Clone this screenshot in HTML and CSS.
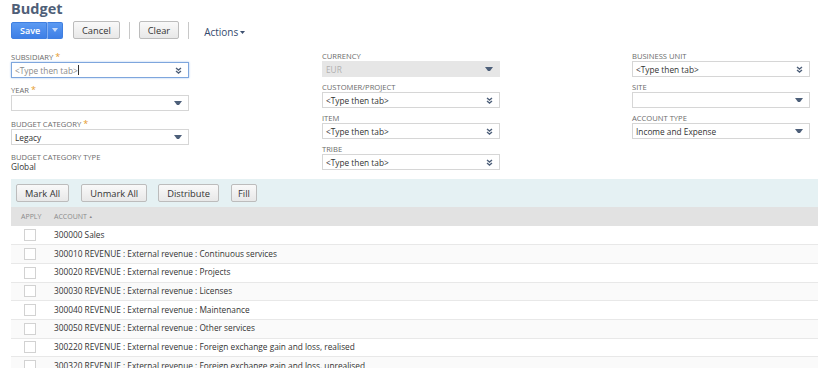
FILE: index.html
```html
<!DOCTYPE html>
<html lang="en">
<head>
  <meta charset="UTF-8" />
  <title>Budget</title>
  <link rel="stylesheet" href="styles.css">
</head>
<body>
  <div class="page">
    <h1 class="page-title">Budget</h1>
    <div class="toolbar">
      <div class="btn-split">
        <button class="btn-primary">Save</button>
        <button class="btn-primary btn-caret"><svg width="6" height="5" viewBox="0 0 6 5"><path d="M0 0 H6 L3 4 Z" fill="#c9dcfb"/></svg></button>
      </div>
      <button class="btn">Cancel</button>
      <span class="divider"></span>
      <button class="btn">Clear</button>
      <span class="divider"></span>
      <span class="actions">Actions <svg width="5" height="3" viewBox="0 0 5 3"><path d="M0 0 H5 L2.5 3 Z" fill="#3d5070"/></svg></span>
    </div>

    <div class="form-grid">
      <div class="form-col">
        <div class="field required">
          <div class="field-label">SUBSIDIARY <span class="star">*</span></div>
          <div class="field-input focused"><span class="muted">&lt;Type then tab&gt;</span><span class="cursor"></span><svg class="ico-dbl" width="7" height="7" viewBox="0 0 7 7"><path d="M1 1 L3.5 3 L6 1 M1 4 L3.5 6 L6 4" fill="none" stroke="#4d5f79" stroke-width="1.4"/></svg></div>
        </div>
        <div class="field required">
          <div class="field-label">YEAR <span class="star">*</span></div>
          <div class="field-input"><span></span><svg class="ico-tri" width="8" height="4" viewBox="0 0 8 4"><path d="M0 0 H8 L5 4 H3 Z" fill="#4d5f79"/></svg></div>
        </div>
        <div class="field required">
          <div class="field-label">BUDGET CATEGORY <span class="star">*</span></div>
          <div class="field-input"><span>Legacy</span><svg class="ico-tri" width="8" height="4" viewBox="0 0 8 4"><path d="M0 0 H8 L5 4 H3 Z" fill="#4d5f79"/></svg></div>
        </div>
        <div class="field">
          <div class="field-label">BUDGET CATEGORY TYPE</div>
          <div class="field-value">Global</div>
        </div>
      </div>

      <div class="form-col">
        <div class="field">
          <div class="field-label">CURRENCY</div>
          <div class="field-input disabled"><span>EUR</span><svg class="ico-tri" width="8" height="4" viewBox="0 0 8 4"><path d="M0 0 H8 L5 4 H3 Z" fill="#4d5f79"/></svg></div>
        </div>
        <div class="field">
          <div class="field-label">CUSTOMER/PROJECT</div>
          <div class="field-input"><span>&lt;Type then tab&gt;</span><svg class="ico-dbl" width="7" height="7" viewBox="0 0 7 7"><path d="M1 1 L3.5 3 L6 1 M1 4 L3.5 6 L6 4" fill="none" stroke="#4d5f79" stroke-width="1.4"/></svg></div>
        </div>
        <div class="field">
          <div class="field-label">ITEM</div>
          <div class="field-input"><span>&lt;Type then tab&gt;</span><svg class="ico-dbl" width="7" height="7" viewBox="0 0 7 7"><path d="M1 1 L3.5 3 L6 1 M1 4 L3.5 6 L6 4" fill="none" stroke="#4d5f79" stroke-width="1.4"/></svg></div>
        </div>
        <div class="field">
          <div class="field-label">TRIBE</div>
          <div class="field-input"><span>&lt;Type then tab&gt;</span><svg class="ico-dbl" width="7" height="7" viewBox="0 0 7 7"><path d="M1 1 L3.5 3 L6 1 M1 4 L3.5 6 L6 4" fill="none" stroke="#4d5f79" stroke-width="1.4"/></svg></div>
        </div>
      </div>

      <div class="form-col">
        <div class="field">
          <div class="field-label">BUSINESS UNIT</div>
          <div class="field-input"><span>&lt;Type then tab&gt;</span><svg class="ico-dbl" width="7" height="7" viewBox="0 0 7 7"><path d="M1 1 L3.5 3 L6 1 M1 4 L3.5 6 L6 4" fill="none" stroke="#4d5f79" stroke-width="1.4"/></svg></div>
        </div>
        <div class="field">
          <div class="field-label">SITE</div>
          <div class="field-input"><span></span><svg class="ico-tri" width="8" height="4" viewBox="0 0 8 4"><path d="M0 0 H8 L5 4 H3 Z" fill="#4d5f79"/></svg></div>
        </div>
        <div class="field">
          <div class="field-label">ACCOUNT TYPE</div>
          <div class="field-input"><span>Income and Expense</span><svg class="ico-tri" width="8" height="4" viewBox="0 0 8 4"><path d="M0 0 H8 L5 4 H3 Z" fill="#4d5f79"/></svg></div>
        </div>
      </div>
    </div>
  </div>

  <div class="sublist">
    <div class="sublist-bar">
      <button class="btn">Mark All</button>
      <button class="btn">Unmark All</button>
      <button class="btn btn-tight">Distribute</button>
      <button class="btn btn-small">Fill</button>
    </div>
    <table class="grid">
      <thead>
        <tr><th class="col-apply">APPLY</th><th>ACCOUNT <span class="sort">&#9650;</span></th></tr>
      </thead>
      <tbody>
        <tr><td class="col-apply"><span class="check"></span></td><td>300000 Sales</td></tr>
        <tr><td class="col-apply"><span class="check"></span></td><td>300010 REVENUE : External revenue : Continuous services</td></tr>
        <tr><td class="col-apply"><span class="check"></span></td><td>300020 REVENUE : External revenue : Projects</td></tr>
        <tr><td class="col-apply"><span class="check"></span></td><td>300030 REVENUE : External revenue : Licenses</td></tr>
        <tr><td class="col-apply"><span class="check"></span></td><td>300040 REVENUE : External revenue : Maintenance</td></tr>
        <tr><td class="col-apply"><span class="check"></span></td><td>300050 REVENUE : External revenue : Other services</td></tr>
        <tr><td class="col-apply"><span class="check"></span></td><td>300220 REVENUE : External revenue : Foreign exchange gain and loss, realised</td></tr>
        <tr><td class="col-apply"><span class="check"></span></td><td>300320 REVENUE : External revenue : Foreign exchange gain and loss, unrealised</td></tr>
      </tbody>
    </table>
  </div>
</body>
</html>
```

FILE: styles.css
```css
* {
  margin: 0;
  padding: 0;
  box-sizing: border-box;
}
html, body {
  background: #fff;
  font-family: 'Open Sans', 'Liberation Sans', sans-serif;
  color: #333;
  overflow: hidden;
}
.page {
  padding: 0 0 0 11px;
}
.page-title {
  font-size: 14.5px;
  line-height: 17px;
  font-weight: 700;
  color: #4f5f78;
}

/* toolbar */
.toolbar {
  display: flex;
  align-items: center;
  margin-top: 4px;
  height: 18px;
}
.btn-split {
  display: flex;
  margin-right: 10px;
}
.btn-primary {
  height: 17px;
  padding: 0 8px;
  border: 1px solid #3f7fe0;
  background: linear-gradient(#5b9af2, #3e7fe6);
  color: #fff;
  font-family: inherit;
  font-size: 9px;
  font-weight: 600;
  border-radius: 2px 0 0 2px;
  width: 36px;
}
.btn-caret {
  width: 16px;
  padding: 0;
  border-left: 1px solid #82aef2;
  border-radius: 0 2px 2px 0;
  display: flex;
  align-items: center;
  justify-content: center;
}
.btn {
  height: 18px;
  padding: 0 8px;
  border: 1px solid #bcbcbc;
  border-radius: 2px;
  background: linear-gradient(#f9f9f9, #e8e8e8);
  color: #333;
  font-family: inherit;
  font-size: 9.3px;
  font-weight: 500;
}
.divider {
  width: 1px;
  height: 17px;
  background: #c8c8c8;
  margin: 0 9px;
}
.actions {
  margin-left: 6px;
  margin-top: 4px;
  font-size: 10px;
  color: #34496d;
  display: flex;
  align-items: center;
  gap: 2px;
}

/* form */
.form-grid {
  display: grid;
  grid-template-columns: 311px 310px 178px;
  margin-top: 12px;
}
.field {
  width: 178px;
  margin-bottom: 5px;
}
.field.required {
  margin-bottom: 7px;
}
.field.required:first-child {
  margin-bottom: 6px;
}
.field-label {
  font-size: 7.6px;
  height: 10px;
  line-height: 10px;
  color: #6b6b6b;
  white-space: nowrap;
}
.field.required .field-label {
  height: 11px;
  line-height: 12px;
}
.star {
  color: #e59b2c;
  font-size: 9px;
  line-height: 0;
}
.field-input {
  height: 16px;
  border: 1px solid #d6d6d6;
  display: flex;
  align-items: center;
  justify-content: space-between;
  padding: 0 6px 0 3px;
  font-size: 8.3px;
  color: #333;
}
.field-input.focused {
  border-color: #7ea6dd;
  box-shadow: 0 0 2px #a9c6ee;
  justify-content: flex-start;
}
.field-input.focused .ico-dbl {
  margin-left: auto;
}
.muted {
  color: #8a8a8a;
}
.cursor {
  width: 1px;
  height: 10px;
  background: #333;
}
.field-input.disabled {
  background: #e6e6e6;
  border-color: #e6e6e6;
  color: #b0b0b0;
}
.field-value {
  font-size: 8.3px;
  line-height: 10px;
  color: #333;
}

/* sublist */
.sublist {
  margin: 2px 0 0 11px;
}
.sublist-bar {
  background: #e5f1f3;
  height: 28px;
  display: flex;
  align-items: center;
  padding-left: 5px;
  gap: 12px;
}
.sublist-bar .btn-tight {
  margin-left: -1px;
}
.sublist-bar .btn-small {
  padding: 0 6px;
}
.grid {
  width: 100%;
  border-collapse: collapse;
}
.grid th {
  background: #e2e2e2;
  height: 19px;
  font-size: 7px;
  font-weight: 400;
  color: #8a8a8a;
  text-align: left;
  padding-left: 0;
}
.grid th.col-apply {
  padding-left: 10px;
  width: 43px;
}
.sort {
  font-size: 4px;
  vertical-align: 1px;
}
.grid td {
  height: 18.7px;
  font-size: 8.3px;
  color: #333;
  border-bottom: 1px solid #e8e8e8;
  padding: 0 0 2px;
}
.grid tbody tr:nth-child(even) td {
  background: #fafafa;
}
.grid td.col-apply {
  padding: 0 0 0 13px;
}
.check {
  display: block;
  width: 12px;
  height: 12px;
  border: 1px solid #d2d2d2;
  background: #fff;
}
```
